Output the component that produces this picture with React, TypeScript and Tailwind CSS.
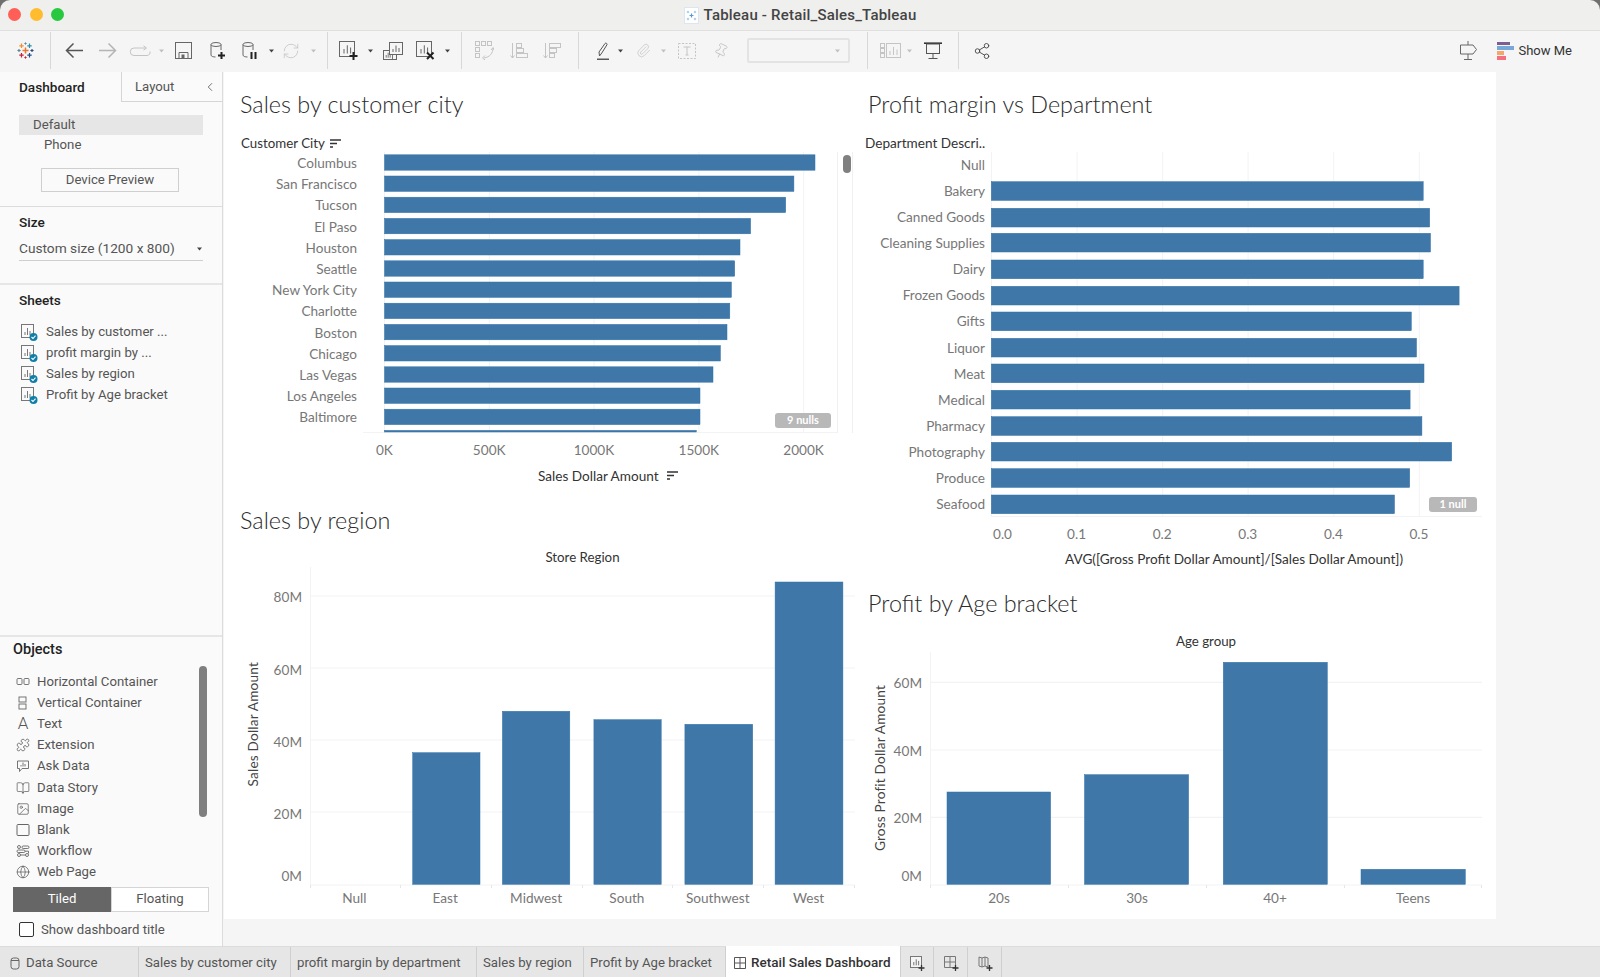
import { BookOpen, ChevronLeft, Globe, Image, Paperclip, Pin, Puzzle, RefreshCw, Share2 } from 'lucide-react'
import type { ReactNode } from 'react'

const BAR = '#3f78a8'
const BAR_EDGE = '#2f70a8'
const GRID = '#f3f3f3'

function Ic({ w, h, className, children }: { w: number; h: number; className?: string; children: ReactNode }) {
  return (
    <svg width={w} height={h} viewBox={`0 0 ${w} ${h}`} fill="none" className={`shrink-0 ${className ?? ''}`}>
      {children}
    </svg>
  )
}

function Caret({ className, light }: { className?: string; light?: boolean }) {
  return (
    <Ic w={5} h={4} className={className}>
      <path d="M0 0.5H5L2.5 3.5Z" fill={light ? '#c0c0c0' : '#444'} />
    </Ic>
  )
}

function Sep({ className }: { className?: string }) {
  return <div className={`w-px h-[37px] bg-[#d8d8d8] shrink-0 ${className ?? ''}`} />
}

function Cross({ x, y, r, c, sw = 1.2 }: { x: number; y: number; r: number; c: string; sw?: number }) {
  return <path d={`M${x - r} ${y}H${x + r}M${x} ${y - r}V${y + r}`} stroke={c} strokeWidth={sw} />
}

function TableauLogo({ className }: { className?: string }) {
  return (
    <Ic w={17} h={17} className={className}>
      <Cross x={8.5} y={8.5} r={3} c="#e8762c" sw={1.5} />
      <Cross x={4.5} y={3.8} r={2.2} c="#f28e2b" />
      <Cross x={12.5} y={3.8} r={2.2} c="#2d8fa8" />
      <Cross x={2} y={8.5} r={1.6} c="#5b879b" />
      <Cross x={15} y={8.5} r={1.6} c="#2a4f7c" />
      <Cross x={4.5} y={13.2} r={2.2} c="#c72037" />
      <Cross x={12.5} y={13.2} r={2.2} c="#1f4f86" />
      <Cross x={8.5} y={1.5} r={1.2} c="#59879b" sw={0.9} />
      <Cross x={8.5} y={15.5} r={1.2} c="#c72037" sw={0.9} />
    </Ic>
  )
}

function Cyl({ children, className }: { children: ReactNode; className?: string }) {
  return (
    <Ic w={16} h={17} className={className}>
      <ellipse cx={6} cy={2.5} rx={5} ry={2} stroke="#666" />
      <path d="M1 2.5V13c0 1.3 2.2 2 4.5 2M11 2.5V8" stroke="#666" />
      {children}
    </Ic>
  )
}

function ChartBox({ x = 0.5, y = 0.5, s = 15, c = '#666' }: { x?: number; y?: number; s?: number; c?: string }) {
  return (
    <g stroke={c}>
      <rect x={x} y={y} width={s} height={s} fill="#f5f5f5" />
      <path d={`M${x + s * 0.3} ${y + s * 0.8}v-${s * 0.3}M${x + s * 0.52} ${y + s * 0.8}v-${s * 0.55}M${x + s * 0.74} ${y + s * 0.8}v-${s * 0.4}`} />
    </g>
  )
}

function SortMark({ className }: { className?: string }) {
  return (
    <Ic w={11} h={10} className={className}>
      <path d="M0 1H11M0 4.5H7M0 8H3" stroke="#333" strokeWidth={1.4} />
    </Ic>
  )
}

function Toolbar() {
  return (
    <div className="flex items-center h-[41px] pl-[17px] pr-[28px] pb-[2px] bg-[#f5f5f5]">
      <TableauLogo />
      <Sep className="ml-[16px]" />
      <Ic w={18} h={17} className="ml-[14px]">
        <path d="M18 8.5H1.5M8.5 1.5l-7 7 7 7" stroke="#555" strokeWidth={1.5} />
      </Ic>
      <Ic w={18} h={17} className="ml-[16px]">
        <path d="M0 8.5h16.5M9.5 1.5l7 7-7 7" stroke="#b5b5b5" strokeWidth={1.5} />
      </Ic>
      <Ic w={22} h={12} className="ml-[12px]">
        <path d="M17 3H5a3.5 3.5 0 0 0 0 7.5h13a3.5 3.5 0 0 0 3-4M14.5 .8 17.5 3l-3 2.2" stroke="#c4c4c4" />
      </Ic>
      <Caret light className="ml-[8px]" />
      <Ic w={17} h={17} className="ml-[11px]">
        <rect x={0.5} y={0.5} width={16} height={16} stroke="#666" />
        <path d="M4 16.5V10.5H13V16.5" stroke="#666" />
        <rect x={6.5} y={12.5} width={3} height={4} fill="#666" />
      </Ic>
      <Cyl className="ml-[18px]">
        <path d="M8 13.5h7M11.5 10v7" stroke="#222" strokeWidth={2} />
      </Cyl>
      <Cyl className="ml-[16px]">
        <path d="M9.5 10v7M13.5 10v7" stroke="#222" strokeWidth={2} />
      </Cyl>
      <Caret className="ml-[11px]" />
      <RefreshCw size={18} strokeWidth={1} color="#c0c0c0" className="ml-[8px] shrink-0" />
      <Caret light className="ml-[11px]" />
      <Sep className="ml-[11px]" />
      <Ic w={19} h={19} className="ml-[11px]">
        <ChartBox />
        <path d="M10.5 15h8M14.5 11v8" stroke="#222" strokeWidth={2} />
      </Ic>
      <Caret className="ml-[10px]" />
      <Ic w={20} h={18} className="ml-[10px]">
        <ChartBox x={0.5} y={8.5} s={9} c="#777" />
        <rect x={0.5} y={8.5} width={13} height={9} stroke="#666" />
        <rect x={6.5} y={0.5} width={13} height={12} stroke="#666" fill="#f5f5f5" />
        <path d="M10 10V7M13 10V3.5M16 10V6" stroke="#666" />
      </Ic>
      <Ic w={19} h={19} className="ml-[13px]">
        <ChartBox />
        <path d="M11 11.5l6.5 6.5M17.5 11.5 11 18" stroke="#222" strokeWidth={2} />
      </Ic>
      <Caret className="ml-[10px]" />
      <Sep className="ml-[11px]" />
      <Ic w={19} h={19} className="ml-[13px]">
        <g stroke="#c4c4c4">
          <rect x={0.5} y={0.5} width={4} height={4} />
          <rect x={6.5} y={0.5} width={4} height={4} />
          <rect x={12.5} y={0.5} width={4} height={4} />
          <rect x={0.5} y={6.5} width={4} height={4} />
          <rect x={0.5} y={12.5} width={4} height={4} />
          <path d="M18 7c0 5-3 9-9 10M10 14.5 7.5 17l2.5 2M16 9l2-2.5 1 2.5" />
        </g>
      </Ic>
      <Ic w={18} h={16} className="ml-[16px]">
        <g stroke="#c4c4c4">
          <path d="M2.5 0v15M0.5 12.5l2 2.5 2-2.5" />
          <rect x={6.5} y={0.5} width={5} height={4} />
          <rect x={6.5} y={5.5} width={7} height={4} />
          <rect x={6.5} y={10.5} width={11} height={4} />
        </g>
      </Ic>
      <Ic w={18} h={16} className="ml-[15px]">
        <g stroke="#c4c4c4">
          <path d="M2.5 0v15M0.5 12.5l2 2.5 2-2.5" />
          <rect x={6.5} y={0.5} width={11} height={4} />
          <rect x={6.5} y={5.5} width={7} height={4} />
          <rect x={6.5} y={10.5} width={5} height={4} />
        </g>
      </Ic>
      <Sep className="ml-[17px]" />
      <Ic w={12} h={18} className="ml-[18px]">
        <path d="M2.5 14 2 10 8 1.5a1.2 1.2 0 0 1 2 1.2L4.8 11Z" stroke="#555" />
        <path d="M0 17.2h12" stroke="#333" strokeWidth={1.2} />
      </Ic>
      <Caret className="ml-[9px]" />
      <Paperclip size={15} strokeWidth={1.1} color="#c0c0c0" className="ml-[13px] shrink-0" />
      <Caret light className="ml-[10px]" />
      <Ic w={18} h={16} className="ml-[12px]">
        <rect x={0.5} y={0.5} width={17} height={15} stroke="#c4c4c4" strokeDasharray="2 1.5" />
        <path d="M5.5 4h7M9 4v8M7.5 12h3" stroke="#c4c4c4" />
      </Ic>
      <Pin size={16} strokeWidth={1.1} color="#bdbdbd" className="ml-[17px] shrink-0 rotate-[25deg]" />
      <div className="ml-[18px] w-[103px] h-[25px] border-2 border-[#e3e3e3] rounded-[2px] flex items-center justify-end pr-[8px] shrink-0">
        <Caret light />
      </div>
      <Sep className="ml-[17px]" />
      <Ic w={21} h={15} className="ml-[12px]">
        <g stroke="#c4c4c4">
          <rect x={0.5} y={0.5} width={4} height={4} />
          <rect x={0.5} y={5.5} width={4} height={4} />
          <rect x={0.5} y={10.5} width={4} height={4} />
          <rect x={6.5} y={0.5} width={14} height={14} />
          <path d="M10 12V8M13.5 12V4M17 12V6.5" />
        </g>
      </Ic>
      <Caret light className="ml-[6px]" />
      <Ic w={18} h={17} className="ml-[12px]">
        <path d="M0 1.2H18" stroke="#333" strokeWidth={1.6} />
        <rect x={2.5} y={2} width={13} height={9.5} stroke="#555" />
        <path d="M9 11.5V16M4.5 16.5h9" stroke="#555" />
      </Ic>
      <Sep className="ml-[16px]" />
      <Share2 size={18} strokeWidth={1.2} color="#444" className="ml-[14px] shrink-0" />
      <Ic w={20} h={19} className="ml-auto">
        <path d="M10 0v19M6 18.5h8" stroke="#666" />
        <path d="M2.5 4H15l3.5 4.5L15 13H2.5Z" stroke="#666" fill="#f5f5f5" />
      </Ic>
      <div className="ml-[19px] w-[17px] flex flex-col gap-[1px] shrink-0">
        <div className="h-[3px] w-[13px] bg-[#7b5f93]" />
        <div className="h-[4px] w-[17px] bg-[#77a8d8]" />
        <div className="h-[4px] w-[7px] bg-[#f4a76a]" />
        <div className="h-[4px] w-[9px] bg-[#f4707f]" />
      </div>
      <span className="ml-[4px] text-[13px] text-[#333] whitespace-nowrap">Show Me</span>
    </div>
  )
}

function SheetIcon() {
  return (
    <Ic w={18} h={18} className="mr-[8px]">
      <rect x={1.5} y={1.5} width={12} height={13} stroke="#777" />
      <path d="M5 12V9M7.5 12V5M10 12V8" stroke="#777" />
      <circle cx={13.5} cy={14} r={4} fill="#0f7fa8" />
      <path d="M11.5 14l1.5 1.5 2.5-2.8" stroke="#fff" strokeWidth={1.1} />
    </Ic>
  )
}

const ICON = 'w-[14px] h-[14px] shrink-0'

const objects: { label: string; icon: ReactNode }[] = [
  {
    label: 'Horizontal Container',
    icon: (
      <Ic w={14} h={14}>
        <rect x={1} y={3.5} width={5} height={6} rx={1} stroke="#666" strokeWidth={0.9} />
        <rect x={8} y={3.5} width={5} height={6} rx={1} stroke="#666" strokeWidth={0.9} />
      </Ic>
    ),
  },
  {
    label: 'Vertical Container',
    icon: (
      <Ic w={14} h={14}>
        <rect x={3} y={1} width={7} height={5} stroke="#666" strokeWidth={0.9} />
        <rect x={3} y={8} width={7} height={5} stroke="#666" strokeWidth={0.9} />
      </Ic>
    ),
  },
  { label: 'Text', icon: <span className="w-[14px] text-center text-[17px] font-light text-[#555] leading-none">A</span> },
  { label: 'Extension', icon: <Puzzle className={ICON} strokeWidth={1.3} color="#555" /> },
  {
    label: 'Ask Data',
    icon: (
      <Ic w={14} h={14}>
        <path d="M1.5 2h11v7.5H6l-2.5 3V9.5h-2Z" stroke="#666" strokeWidth={0.9} />
        <path d="M5 7.5V6M7 7.5V3.5M9 7.5V5" stroke="#666" strokeWidth={0.9} />
      </Ic>
    ),
  },
  { label: 'Data Story', icon: <BookOpen className={ICON} strokeWidth={1.2} color="#555" /> },
  { label: 'Image', icon: <Image className={ICON} strokeWidth={1.2} color="#555" /> },
  {
    label: 'Blank',
    icon: (
      <Ic w={14} h={14}>
        <rect x={1} y={1.5} width={12} height={11} rx={1} stroke="#666" />
      </Ic>
    ),
  },
  {
    label: 'Workflow',
    icon: (
      <Ic w={14} h={14}>
        <g stroke="#666" strokeWidth={0.9}>
          <circle cx={3} cy={3} r={1.5} />
          <rect x={6} y={2} width={7} height={2.5} rx={1.2} />
          <rect x={1} y={6} width={8} height={2.5} rx={1.2} />
          <circle cx={3} cy={11} r={1.5} />
          <circle cx={11} cy={11} r={1.5} />
          <path d="M4.5 11H9.5M9 7.2h3.5V9.5" />
        </g>
      </Ic>
    ),
  },
  { label: 'Web Page', icon: <Globe className={ICON} strokeWidth={1.2} color="#555" /> },
]

const sheets = ['Sales by customer ...', 'profit margin by ...', 'Sales by region', 'Profit by Age bracket']

function Sidebar() {
  return (
    <aside className="w-[223px] shrink-0 flex flex-col bg-[#fafafa] border-r border-[#dcdcdc] text-[13.2px] text-[#555]">
      <div className="h-[135px] shrink-0 border-b border-[#dcdcdc]">
        <div className="flex h-[30px]">
          <div className="w-[121px] pl-[19px] flex items-center font-medium text-[13.6px] text-[#222]">Dashboard</div>
          <div className="flex-1 border-l border-b border-[#d5d5d5] flex items-center justify-between pl-[13px] pr-[5px]">
            <span>Layout</span>
            <ChevronLeft size={14} strokeWidth={1.4} color="#555" />
          </div>
        </div>
        <div className="mt-[13px] mx-[19px] h-[20px] bg-[#e6e6e6] pl-[14px] flex items-center">Default</div>
        <div className="h-[20px] pl-[44px] flex items-center">Phone</div>
        <div className="mt-[13px] ml-[41px] w-[138px] h-[24px] border border-[#cfcfcf] flex items-center justify-center">Device Preview</div>
      </div>

      <div className="h-[78px] shrink-0 border-b-2 border-[#e6e6e6] px-[19px] pt-[6px]">
        <div className="h-[18px] flex items-center font-medium text-[13.6px] text-[#222]">Size</div>
        <div className="mt-[8px] h-[22px] border-b border-[#cfcfcf] flex items-center justify-between pr-[1px] pb-[2px]">
          <span className="text-[13.7px]">Custom size (1200 x 800)</span>
          <Caret />
        </div>
      </div>

      <div className="flex-1 pt-[6px]">
        <div className="h-[18px] pl-[19px] flex items-center font-medium text-[13.6px] text-[#222]">Sheets</div>
        <div className="mt-[12px] pl-[20px]">
          {sheets.map((s) => (
            <div key={s} className="h-[21.2px] flex items-center">
              <SheetIcon />
              <span>{s}</span>
            </div>
          ))}
        </div>
      </div>

      <div className="h-[311px] shrink-0 border-t-2 border-[#e6e6e6] pt-[4px]">
        <div className="h-[18px] pl-[13px] flex items-center font-medium text-[14.5px] text-[#222]">Objects</div>
        <div className="mt-[12px] flex">
          <div className="w-[199px] pl-[16px]">
            {objects.map((o) => (
              <div key={o.label} className="h-[21.2px] flex items-center gap-[7px]">
                {o.icon}
                <span>{o.label}</span>
              </div>
            ))}
          </div>
          <div className="-mt-[5px] h-[151px] w-[8px] rounded-[4px] bg-[#7f7f7f]" />
        </div>
        <div className="mt-[4px] mx-[13px] w-[196px] h-[25px] flex">
          <div className="w-[98px] bg-[#666] text-white flex items-center justify-center">Tiled</div>
          <div className="flex-1 bg-white border border-[#d5d5d5] flex items-center justify-center">Floating</div>
        </div>
        <div className="mt-[8px] pl-[19px] flex items-center gap-[7px]">
          <div className="w-[15px] h-[15px] border border-[#333] rounded-[2px] bg-white" />
          <span>Show dashboard title</span>
        </div>
      </div>
    </aside>
  )
}

function Title({ children, className }: { children: ReactNode; className?: string }) {
  return <h2 className={`h-[32px] leading-[32px] text-[23.4px] text-[#2b2b2b] whitespace-nowrap font-light ${className ?? ''}`}>{children}</h2>
}

function NullBadge({ label, className }: { label: string; className?: string }) {
  return (
    <div className={`absolute h-[15px] rounded-[3px] bg-[#b8b8b8] text-white text-[11px] font-bold flex items-center justify-center ${className ?? ''}`}>
      {label}
    </div>
  )
}

const cities = ['Columbus', 'San Francisco', 'Tucson', 'El Paso', 'Houston', 'Seattle', 'New York City', 'Charlotte', 'Boston', 'Chicago', 'Las Vegas', 'Los Angeles', 'Baltimore', 'Phoenix']
const cityEnds = [815, 793.9, 785.7, 750.6, 740, 734.7, 731.4, 729.8, 727, 720.4, 713, 700, 700, 696.3]

function CustomerCity() {
  const x0 = 21.5
  return (
    <div className="h-[433px] pl-[16px] pt-[16px]">
      <Title>Sales by customer city</Title>
      <div className="mt-[16px] ml-[1px] h-[16px] flex items-center gap-[5px] text-[13.3px] text-[#333]">
        Customer City <SortMark />
      </div>
      <div className="flex h-[281px]">
        <div className="w-[117px] pt-[1px] overflow-hidden text-[13.6px] text-[#777] text-right">
          {cities.map((c) => (
            <div key={c} className="h-[21.2px] leading-[21.2px]">{c}</div>
          ))}
        </div>
        <div className="relative ml-[6px] w-[474px]">
          <svg width={474} height={281} viewBox="0 0 474 281">
            {[0, 104.8, 209.6, 314.4, 419.2].map((g) => (
              <path key={g} d={`M${x0 + g} 0V280`} stroke={GRID} />
            ))}
            <path d="M0 280.5H474" stroke={GRID} />
            {cityEnds.map((e, i) => {
              const y = 2.8 + i * 21.2
              return <rect key={i} x={x0} y={y} width={e - 363 - x0} height={Math.min(15.4, 280 - y)} fill={BAR} stroke={BAR_EDGE} strokeWidth={0.5} />
            })}
          </svg>
          <NullBadge label="9 nulls" className="right-[6px] bottom-[5px] w-[56px]" />
        </div>
        <div className="w-[16px] border-x border-[#f0f0f0] pl-[5px] pt-[3px]">
          <div className="w-[8px] h-[18px] rounded-[4px] bg-[#808080]" />
        </div>
      </div>
      <div className="h-[35px] ml-[92px] flex items-center text-[13.6px] text-[#777]">
        {['0K', '500K', '1000K', '1500K', '2000K'].map((t) => (
          <div key={t} className="w-[104.8px] text-center">{t}</div>
        ))}
      </div>
      <div className="h-[16px] ml-[298px] flex items-center gap-[8px] text-[13.6px] text-[#333]">
        Sales Dollar Amount <SortMark />
      </div>
    </div>
  )
}

const depts = ['Null', 'Bakery', 'Canned Goods', 'Cleaning Supplies', 'Dairy', 'Frozen Goods', 'Gifts', 'Liquor', 'Meat', 'Medical', 'Pharmacy', 'Photography', 'Produce', 'Seafood']
const deptEnds = [1422.7, 1429.2, 1430, 1422.7, 1458.6, 1410.8, 1416, 1423.5, 1409.6, 1421.4, 1451.2, 1409.2, 1394]
const deptTops = [29.7, 56.3, 81.3, 108, 134.3, 160, 186.3, 212, 238.3, 264.7, 290.3, 316.7, 343]

function ProfitMargin() {
  return (
    <div className="h-[515px] pl-[3px] pt-[16px]">
      <Title className="ml-[3px]">Profit margin vs Department</Title>
      <div className="mt-[15px] h-[17px] flex items-center text-[13.6px] text-[#333]">Department Descri..</div>
      <div className="flex h-[365px]">
        <div className="w-[120px] text-[13.6px] text-[#777] text-right">
          {depts.map((d) => (
            <div key={d} className="h-[26.08px] leading-[26.08px]">{d}</div>
          ))}
        </div>
        <div className="relative ml-[6px] w-[491px]">
          <svg width={491} height={365} viewBox="0 0 491 365">
            {[0, 85.6, 171.2, 256.6, 342.2, 427.8].map((g) => (
              <path key={g} d={`M${g + 0.5} 0V365`} stroke={GRID} />
            ))}
            <path d="M0 364.5H491" stroke={GRID} />
            {deptEnds.map((e, i) => (
              <rect key={i} x={0.3} y={deptTops[i]} width={e - 990.8} height={18.7} fill={BAR} stroke={BAR_EDGE} strokeWidth={0.5} />
            ))}
          </svg>
          <NullBadge label="1 null" className="right-[5px] bottom-[5px] w-[48px]" />
        </div>
      </div>
      <div className="h-[35px] ml-[126px] flex items-center text-[13.6px] text-[#777]">
        <div className="w-[42.8px] pl-[2px]">0.0</div>
        {['0.1', '0.2', '0.3', '0.4', '0.5'].map((t) => (
          <div key={t} className="w-[85.6px] text-center">{t}</div>
        ))}
      </div>
      <div className="h-[14px] ml-[200px] flex items-center text-[13.6px] text-[#333] whitespace-nowrap">
        AVG([Gross Profit Dollar Amount]/[Sales Dollar Amount])
      </div>
    </div>
  )
}

function VBars({ w, h, gridY, base, ticks, bars }: { w: number; h: number; gridY: number[]; base: number; ticks: number[]; bars: { x: number; x2: number; top: number }[] }) {
  return (
    <svg width={w} height={h} viewBox={`0 0 ${w} ${h}`}>
      <path d={`M0.5 0V${base}`} stroke={GRID} />
      {gridY.map((g) => (
        <path key={g} d={`M0 ${g}H${w}`} stroke={GRID} strokeWidth={1.2} />
      ))}
      <path d={`M0 ${base}H${w}`} stroke={GRID} />
      {ticks.map((t) => (
        <path key={t} d={`M${t} ${base}v3`} stroke="#e6e6e6" />
      ))}
      {bars.map((b) => (
        <rect key={b.x} x={b.x} y={b.top} width={b.x2 - b.x} height={base - 0.7 - b.top} fill={BAR} stroke={BAR_EDGE} strokeWidth={0.5} />
      ))}
    </svg>
  )
}

function SalesRegion() {
  return (
    <div className="h-[414px] pl-[16px]">
      <Title className="-mt-px">Sales by region</Title>
      <div className="mt-[13px] ml-[70px] w-[545px] h-[18px] flex items-center justify-center text-[13.3px] text-[#333]">Store Region</div>
      <div className="flex h-[321px]">
        <div className="w-[26px] pb-[6px] flex items-center justify-center">
          <span className="[writing-mode:vertical-rl] rotate-180 text-[13.6px] tracking-[0.2px] text-[#444] whitespace-nowrap">Sales Dollar Amount</span>
        </div>
        <div className="w-[36px] pt-[22px] text-[13.6px] text-[#777] text-right leading-[16px]">
          <div className="h-[73px]">80M</div>
          <div className="h-[72px]">60M</div>
          <div className="h-[72px]">40M</div>
          <div className="h-[62px]">20M</div>
          <div>0M</div>
        </div>
        <div className="ml-[8px]">
          <VBars
            w={545}
            h={321}
            gridY={[29, 101, 173, 245]}
            base={318}
            ticks={[0.5, 90.5, 181.5, 272.5, 362.5, 453.5, 544.5]}
            bars={[
              { x: 102.7, x2: 170, top: 185.7 },
              { x: 192.4, x2: 259.8, top: 144.3 },
              { x: 283.9, x2: 351.2, top: 152.7 },
              { x: 374.9, x2: 442.7, top: 157.3 },
              { x: 465.1, x2: 532.9, top: 15 },
            ]}
          />
        </div>
      </div>
      <div className="h-[17px] ml-[70px] w-[545px] -translate-x-[1px] grid grid-cols-6 items-center text-center text-[13.6px] text-[#777]">
        {['Null', 'East', 'Midwest', 'South', 'Southwest', 'West'].map((t) => (
          <div key={t}>{t}</div>
        ))}
      </div>
    </div>
  )
}

function AgeBracket() {
  return (
    <div className="h-[332px] pl-[6px]">
      <Title>Profit by Age bracket</Title>
      <div className="mt-[13px] ml-[62px] w-[552px] h-[20px] flex items-center justify-center text-[13.3px] text-[#333]">Age group</div>
      <div className="flex h-[236px]">
        <div className="w-[25px] pb-[4px] flex items-center justify-center">
          <span className="[writing-mode:vertical-rl] rotate-180 text-[13.6px] tracking-[0.2px] text-[#444] whitespace-nowrap">Gross Profit Dollar Amount</span>
        </div>
        <div className="w-[29px] pt-[23px] text-[13.6px] text-[#777] text-right leading-[16px]">
          <div className="h-[68px]">60M</div>
          <div className="h-[67px]">40M</div>
          <div className="h-[58px]">20M</div>
          <div>0M</div>
        </div>
        <div className="ml-[8px]">
          <VBars
            w={552}
            h={236}
            gridY={[30.3, 98, 165.3]}
            base={233}
            ticks={[0.5, 138.5, 276.5, 414.5, 551.5]}
            bars={[
              { x: 17, x2: 120.6, top: 140 },
              { x: 154.5, x2: 258.6, top: 122.7 },
              { x: 293.3, x2: 397.3, top: 10.3 },
              { x: 431, x2: 535.3, top: 217.3 },
            ]}
          />
        </div>
      </div>
      <div className="h-[17px] ml-[62px] w-[552px] grid grid-cols-4 items-center text-center text-[13.6px] text-[#777]">
        {['20s', '30s', '40+', 'Teens'].map((t) => (
          <div key={t}>{t}</div>
        ))}
      </div>
    </div>
  )
}

function BottomTabs() {
  return (
    <div className="h-[31px] shrink-0 flex bg-[#e6e6e6] border-t border-[#dcdcdc] text-[13.2px] text-[#555]">
      <div className="w-[139px] pt-[2px] border-r border-[#cfcfcf] flex items-center pl-[10px] gap-[6px]">
        <Ic w={10} h={13}>
          <rect x={1} y={1} width={8} height={11} rx={2.5} stroke="#666" />
          <path d="M1 3.5h8" stroke="#666" />
        </Ic>
        Data Source
      </div>
      <div className="w-[152px] pt-[2px] border-r border-[#cfcfcf] flex items-center pl-[6px]">Sales by customer city</div>
      <div className="w-[186px] pt-[2px] border-r border-[#cfcfcf] flex items-center pl-[6px]">profit margin by department</div>
      <div className="w-[107px] pt-[2px] border-r border-[#cfcfcf] flex items-center pl-[6px]">Sales by region</div>
      <div className="w-[142px] pt-[2px] border-r border-[#cfcfcf] flex items-center pl-[6px]">Profit by Age bracket</div>
      <div className="w-[175px] pt-[2px] bg-white -mt-px border-r border-[#cfcfcf] flex items-center pl-[8px] gap-[5px] text-[13.5px] font-medium text-[#333]">
        <Ic w={12} h={12}>
          <path d="M.5.5h11v11H.5ZM.5 6h11M6 .5v11" stroke="#555" />
        </Ic>
        Retail Sales Dashboard
      </div>
      <div className="w-[33px] pt-[2px] border-r border-[#cfcfcf] flex items-center justify-center">
        <Ic w={16} h={16}>
          <ChartBox x={1.5} y={1.5} s={11} c="#777" />
          <path d="M9.5 13h6M12.5 10v6" stroke="#333" strokeWidth={1.3} />
        </Ic>
      </div>
      <div className="w-[34px] pt-[2px] border-r border-[#cfcfcf] flex items-center justify-center">
        <Ic w={16} h={16}>
          <path d="M1.5 1.5h11v11h-11ZM1.5 7h11M7 1.5v11" stroke="#777" fill="#e6e6e6" />
          <path d="M9.5 13h6M12.5 10v6" stroke="#333" strokeWidth={1.3} />
        </Ic>
      </div>
      <div className="w-[34px] pt-[2px] border-r border-[#cfcfcf] flex items-center justify-center">
        <Ic w={16} h={16}>
          <path d="M2 2l3 1 3-1 3 1v9l-3-1-3 1-3-1ZM5 3v9M8 2v9" stroke="#777" />
          <path d="M9.5 13h6M12.5 10v6" stroke="#333" strokeWidth={1.3} />
        </Ic>
      </div>
    </div>
  )
}

export default function App() {
  return (
    <div className="h-[977px] w-[1600px] overflow-hidden flex flex-col bg-[#6f6f6f] font-[Roboto,sans-serif]">
      <div className="h-[31px] shrink-0 relative flex items-center justify-center bg-[#efefee] border-b border-[#e0e0e0] rounded-t-[10px]">
        <div className="absolute left-[8px] top-[8px] flex gap-[8.5px]">
          <div className="w-[13px] h-[13px] rounded-full bg-[#ff5f57]" />
          <div className="w-[13px] h-[13px] rounded-full bg-[#febc2e]" />
          <div className="w-[13px] h-[13px] rounded-full bg-[#28c840]" />
        </div>
        <div className="w-[15px] h-[17px] mr-[5px] bg-white border border-[#dde6ee] flex items-center justify-center">
          <Ic w={11} h={11}>
            <Cross x={5.5} y={5.5} r={2} c="#5b9bd5" />
            <Cross x={2} y={2} r={1.2} c="#8db7dc" sw={0.8} />
            <Cross x={9} y={2} r={1.2} c="#8db7dc" sw={0.8} />
            <Cross x={2} y={9} r={1.2} c="#8db7dc" sw={0.8} />
            <Cross x={9} y={9} r={1.2} c="#8db7dc" sw={0.8} />
          </Ic>
        </div>
        <span className="text-[15px] tracking-[0.2px] font-medium text-[#444]">Tableau - Retail_Sales_Tableau</span>
      </div>
      <Toolbar />
      <div className="flex flex-1 min-h-0">
        <Sidebar />
        <main className="flex-1 bg-[#f5f5f5]">
          <div className="ml-px w-[1272px] h-[847px] bg-white flex font-[Lato,sans-serif]">
            <div className="w-[638px] shrink-0">
              <CustomerCity />
              <SalesRegion />
            </div>
            <div className="w-[634px] shrink-0">
              <ProfitMargin />
              <AgeBracket />
            </div>
          </div>
        </main>
      </div>
      <BottomTabs />
    </div>
  )
}
